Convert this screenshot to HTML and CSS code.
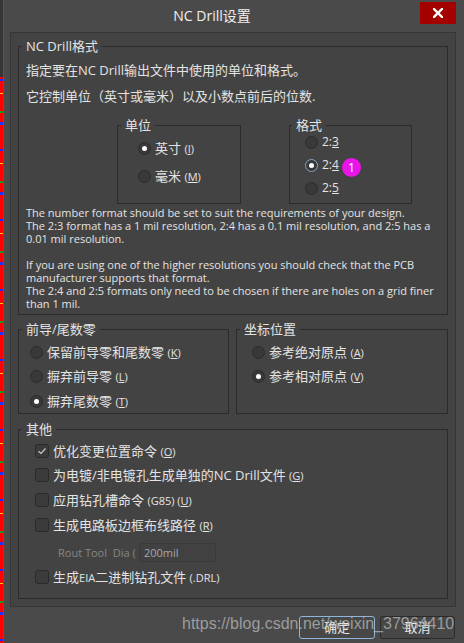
FILE: index.html
```html
<!DOCTYPE html>
<html>
<head>
<meta charset="utf-8">
<title>NC Drill设置</title>
<link rel="stylesheet" href="styles.css">
</head>
<body>
<div class="screen">
  <div class="strip"></div>
  <div class="window">
    <div class="titlebar">
      <div class="title">NC Drill设置</div>
      <div class="close">
        <svg width="10" height="10" viewBox="0 0 10 10"><path d="M1 1 L9 9 M9 1 L1 9" stroke="#fff" stroke-width="2.4" stroke-linecap="square"/></svg>
      </div>
    </div>
    <div class="panel">
      <fieldset class="group g-format">
        <legend>NC Drill格式</legend>
        <p class="intro first">指定要在NC Drill输出文件中使用的单位和格式。</p>
        <p class="intro">它控制单位（英寸或毫米）以及小数点前后的位数.</p>
        <div class="subrow">
          <fieldset class="group sub units">
            <legend>单位</legend>
            <div class="radio-row r1"><span class="radio on"></span><span class="lbl">英寸 <span class="key">(<u>I</u>)</span></span></div>
            <div class="radio-row r2"><span class="radio"></span><span class="lbl">毫米 <span class="key">(<u>M</u>)</span></span></div>
          </fieldset>
          <fieldset class="group sub formats">
            <legend>格式</legend>
            <div class="radio-row"><span class="radio"></span><span class="lbl num">2:<u>3</u></span></div>
            <div class="radio-row f2"><span class="radio on focus"></span><span class="lbl num">2:<u>4</u></span><span class="badge">1</span></div>
            <div class="radio-row f2"><span class="radio"></span><span class="lbl num">2:<u>5</u></span></div>
          </fieldset>
        </div>
        <p class="note">The number format should be set to suit the requirements of your design.<br>The 2:3 format has a 1 mil resolution, 2:4 has a 0.1 mil resolution, and 2:5 has a<br>0.01 mil resolution.<br>&nbsp;<br>If you are using one of the higher resolutions you should check that the PCB<br>manufacturer supports that format.<br>The 2:4 and 2:5 formats only need to be chosen if there are holes on a grid finer<br>than 1 mil.</p>
      </fieldset>

      <div class="row2">
        <fieldset class="group zeros">
          <legend>前导/尾数零</legend>
          <div class="radio-row"><span class="radio"></span><span class="lbl">保留前导零和尾数零 <span class="key">(<u>K</u>)</span></span></div>
          <div class="radio-row z2"><span class="radio"></span><span class="lbl">摒弃前导零 <span class="key">(<u>L</u>)</span></span></div>
          <div class="radio-row z2"><span class="radio on"></span><span class="lbl">摒弃尾数零 <span class="key">(<u>T</u>)</span></span></div>
        </fieldset>
        <fieldset class="group coords">
          <legend>坐标位置</legend>
          <div class="radio-row"><span class="radio"></span><span class="lbl">参考绝对原点 <span class="key">(<u>A</u>)</span></span></div>
          <div class="radio-row z2"><span class="radio on"></span><span class="lbl">参考相对原点 <span class="key">(<u>V</u>)</span></span></div>
        </fieldset>
      </div>

      <fieldset class="group other">
        <legend>其他</legend>
        <div class="check-row c1"><span class="check on"><svg width="10" height="10" viewBox="0 0 10 10"><path d="M1.5 5.2 L4 7.5 L8.5 2.5" fill="none" stroke="#c9c9c9" stroke-width="1.2"/></svg></span><span class="lbl">优化变更位置命令 <span class="key">(<u>O</u>)</span></span></div>
        <div class="check-row c2"><span class="check"></span><span class="lbl">为电镀/非电镀孔生成单独的NC Drill文件 <span class="key">(<u>G</u>)</span></span></div>
        <div class="check-row c3"><span class="check"></span><span class="lbl">应用钻孔槽命令 <span class="key">(G85) (<u>U</u>)</span></span></div>
        <div class="check-row c3"><span class="check"></span><span class="lbl">生成电路板边框布线路径 <span class="key">(<u>R</u>)</span></span></div>
        <div class="rout-row"><span class="rout-lbl">Rout Tool  Dia (</span><span class="input">200mil</span></div>
        <div class="check-row c3"><span class="check"></span><span class="lbl">生成<span class="small">EIA</span>二进制钻孔文件 <span class="key">(.DRL)</span></span></div>
      </fieldset>
    </div>
    <div class="buttons">
      <div class="btn ok">确定</div>
      <div class="btn">取消</div>
    </div>
  </div>
  <div class="watermark">https://blog.csdn.net/weixin_37964410</div>
</div>
</body>
</html>
```

FILE: styles.css
```css
* { box-sizing: border-box; }
html, body { margin: 0; padding: 0; }
body {
  width: 464px;
  height: 643px;
  overflow: hidden;
  background: #3a3a3a;
  font-family: "Open Sans", "Noto Sans CJK SC", sans-serif;
  color: #e4e4e4;
}
.screen {
  display: flex;
  height: 643px;
  position: relative;
}
.strip {
  width: 3px;
  flex: none;
  background:
    linear-gradient(#363636 0 77px, transparent 77px),
    repeating-linear-gradient(to bottom,
      #ff0000 0 9px, #1a2cff 9px 11px, #ff0000 11px 23px, #ffd400 23px 24px,
      #ff0000 24px 41px, #1f9a2e 41px 43px, #ff0000 43px 52px, #2030ff 52px 55px,
      #ff0000 55px 70px);
}
.window {
  flex: 1;
  height: 643px;
  background: #4a4a4a;
  display: flex;
  flex-direction: column;
  border-left: 1px solid #575757;
}
.titlebar {
  height: 32px;
  display: flex;
  align-items: flex-start;
  flex: none;
}
.title {
  flex: 1;
  text-align: center;
  line-height: 32px;
  height: 32px;
  font-size: 14px;
  color: #f0f0f0;
}
.close {
  width: 36px;
  height: 22px;
  margin-top: 2px;
  margin-right: 8px;
  background: #a50000;
  display: flex;
  align-items: center;
  justify-content: center;
}
.panel {
  flex: none;
  height: 575px;
  margin: 0 8px 0 6px;
  border: 1px solid #363636;
  background: #434343;
  padding: 5px 7px 0 7px;
}
fieldset.group {
  margin: 0;
  padding: 0;
  border: 1px solid #2b2b2b;
  min-width: 0;
}
fieldset.group legend {
  font-size: 13px;
  line-height: 16px;
  height: 16px;
  padding: 0 4px;
  margin-left: 3px;
  color: #e4e4e4;
  white-space: nowrap;
}
fieldset.g-format { height: 277px; }
.intro {
  margin: 6px 0 0 0;
  padding-left: 7px;
  font-size: 13px;
  line-height: 20px;
  height: 20px;
  white-space: nowrap;
}
.subrow {
  display: flex;
  gap: 48px;
  margin-top: 11px;
  padding-left: 98px;
}
fieldset.sub { height: 87px; }
fieldset.units { width: 124px; padding: 6px 0 0 20px; }
fieldset.units legend { margin-left: -17px; }
fieldset.formats { width: 123px; padding: 0 0 0 15px; }
fieldset.formats legend { margin-left: -13px; }
.radio-row {
  display: flex;
  align-items: center;
  height: 18px;
}
.units .r2 { margin-top: 10px; }
.formats .f2 { margin-top: 5px; }
.radio {
  width: 13px;
  height: 13px;
  flex: none;
  border-radius: 50%;
  background: #393939;
  border: 1px solid #2c2c2c;
  margin-right: 4px;
  display: flex;
  align-items: center;
  justify-content: center;
}
.radio.on::after {
  content: "";
  width: 5px;
  height: 5px;
  border-radius: 50%;
  background: #ffffff;
}
.radio.focus { border-color: #86a6c6; }
.lbl {
  font-size: 13px;
  line-height: 18px;
  white-space: nowrap;
}
.lbl.num {
  font-size: 12px;
  width: 20px;
  flex: none;
}
.key { font-size: 11px; }
.small { font-size: 11px; }
.badge {
  width: 19px;
  height: 19px;
  margin-top: 4px;
  border-radius: 50%;
  background: #e814e8;
  color: #fff;
  font-size: 13px;
  line-height: 19px;
  text-align: center;
  flex: none;
}
.note {
  margin: 2px 0 0 0;
  padding-left: 7px;
  font-size: 11px;
  line-height: 13px;
  white-space: nowrap;
}
.row2 {
  display: flex;
  gap: 7px;
  margin-top: 6px;
}
fieldset.zeros { width: 211px; height: 93px; padding: 6px 0 0 11px; }
fieldset.zeros legend { margin-left: -8px; }
fieldset.coords { width: 212px; height: 93px; padding: 6px 0 0 15px; }
fieldset.coords legend { margin-left: -12px; }
.row2 .z2 { margin-top: 6.5px; }
fieldset.other {
  margin-top: 7px;
  height: 178px;
  padding: 0 0 0 16px;
}
fieldset.other legend { margin-left: -13px; }
.check-row {
  display: flex;
  align-items: center;
  height: 20px;
}
.check-row.c1 { margin-top: 4px; }
.check-row.c2 { margin-top: 4px; }
.check-row.c3 { margin-top: 5px; }
.check {
  width: 14px;
  height: 14px;
  flex: none;
  border-radius: 3px;
  background: #3b3b3b;
  border: 1px solid #2a2a2a;
  margin-right: 4px;
  display: flex;
  align-items: center;
  justify-content: center;
}
.rout-row {
  display: flex;
  align-items: center;
  height: 20px;
  margin-top: 7px;
  padding-left: 23px;
}
.rout-lbl {
  width: 81px;
  flex: none;
  font-size: 11px;
  color: #868686;
  white-space: pre;
}
.input {
  width: 77px;
  height: 19px;
  flex: none;
  background: #414141;
  border: 1px solid #3a3a3a;
  border-radius: 2px;
  font-size: 11px;
  line-height: 17px;
  padding-left: 4px;
  color: #a8a8a8;
}
.buttons {
  display: flex;
  justify-content: flex-end;
  gap: 5px;
  margin-top: 9px;
  padding-right: 9px;
}
.btn {
  width: 75px;
  height: 23px;
  border: 1px solid #2b2b2b;
  border-radius: 3px;
  background: #474747;
  font-size: 13px;
  line-height: 21px;
  text-align: center;
  color: #eaeaea;
}
.btn.ok {
  width: 76px;
  border-color: #8fb5da;
}
.watermark {
  position: absolute;
  left: 182px;
  top: 614px;
  font-family: "Liberation Sans", Arial, sans-serif;
  font-size: 16px;
  line-height: 20px;
  color: rgba(190, 190, 190, 0.72);
  white-space: nowrap;
  pointer-events: none;
}
```
